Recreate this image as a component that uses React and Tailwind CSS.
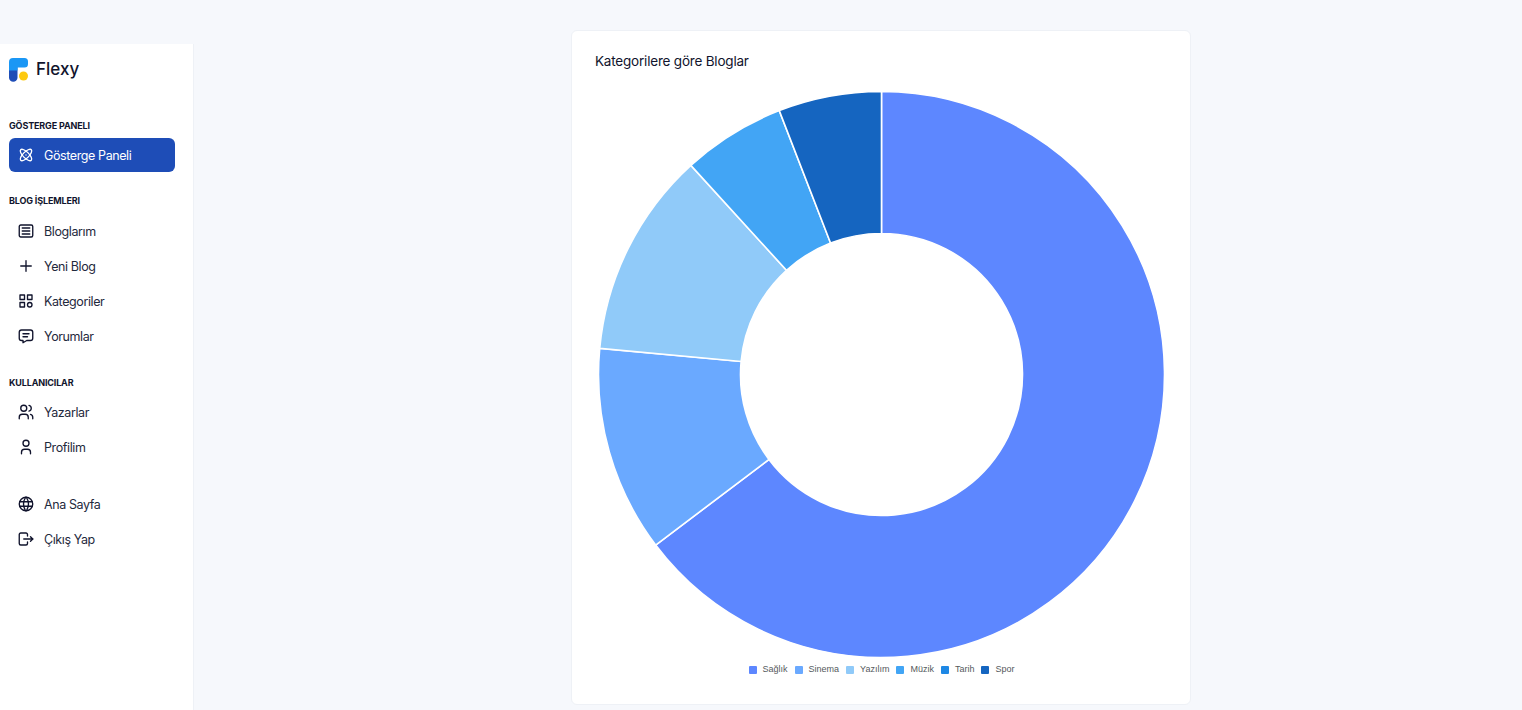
import React from "react";
import { TbAtom, TbArticle, TbPlus, TbCategory, TbMessage, TbUsers, TbUser, TbWorld, TbLogout } from "react-icons/tb";

const slices = [
  { label: "Sağlık", value: 11, color: "#5D87FF" },
  { label: "Sinema", value: 2, color: "#6AA9FF" },
  { label: "Yazılım", value: 2, color: "#90CAF9" },
  { label: "Müzik", value: 1, color: "#42A5F5" },
  { label: "Tarih", value: 0, color: "#1E88E5" },
  { label: "Spor", value: 1, color: "#1565C0" },
];

function point(r, turn) {
  const a = turn * 2 * Math.PI;
  return [(282.5 + r * Math.sin(a)).toFixed(2), (282.5 - r * Math.cos(a)).toFixed(2)];
}

function Donut() {
  const total = slices.reduce((s, x) => s + x.value, 0);
  let from = 0;
  return (
    <svg width="565" height="565" viewBox="0 0 565 565" className="block overflow-visible">
      {slices.filter((s) => s.value > 0).map((s) => {
        const to = from + s.value / total;
        const big = to - from > 0.5 ? 1 : 0;
        const [x1, y1] = point(283, from);
        const [x2, y2] = point(283, to);
        const [x3, y3] = point(141, to);
        const [x4, y4] = point(141, from);
        from = to;
        return (
          <path
            key={s.label}
            d={`M${x1} ${y1}A283 283 0 ${big} 1 ${x2} ${y2}L${x3} ${y3}A141 141 0 ${big} 0 ${x4} ${y4}Z`}
            fill={s.color}
            stroke="#fff"
            strokeWidth="1.6"
          />
        );
      })}
    </svg>
  );
}

function NavItem({ icon: Icon, label, active }) {
  return (
    <a
      className={`flex items-center h-[34px] pl-[8px] rounded-md text-[12.5px] tracking-[-0.4px] ${
        active ? "bg-[#1e4db7] text-white" : "text-[#1f2a3d]"
      }`}
    >
      <Icon size={18} strokeWidth={1.8} className={active ? "text-white" : "text-[#11142d]"} />
      <span className="ml-[9px] mt-[2px]">{label}</span>
    </a>
  );
}

function Heading({ children }) {
  return <div className="text-[9px] font-bold leading-[12px] tracking-[-0.15px] text-[#11142d]">{children}</div>;
}

export default function App() {
  return (
    <div
      className="flex h-[710px] overflow-hidden bg-[#f6f8fc]"
      style={{ fontFamily: '"Inter", "Noto Sans", sans-serif' }}
    >
      <aside className="w-[194px] shrink-0 mt-[44px] bg-white border-r border-[#eef1f6] pl-[9px] pr-[18px]">
        <div className="flex items-center gap-[8px] h-[52px]">
          <svg width="19" height="24" viewBox="0 0 19 24">
            <path d="M0 6h8.500v13.500a4.250 4.250 0 0 1-8.500 0z" fill="#1e4db7" />
            <path d="M4 0h11.500a3.500 3.500 0 0 1 3.500 3.500v2.500a3.500 3.500 0 0 1-3.500 3.500h-7v3h-8.500v-8.500a4 4 0 0 1 4-4z" fill="#1a97f5" />
            <circle cx="14.500" cy="18" r="4.500" fill="#fdc90f" />
          </svg>
          <span className="text-[17px] font-medium text-[#11142d]">Flexy</span>
        </div>
        <div className="mt-[24px]">
          <Heading>GÖSTERGE PANELI</Heading>
          <div className="mt-[6px]">
            <NavItem icon={TbAtom} label="Gösterge Paneli" active />
          </div>
        </div>
        <div className="mt-[23px]">
          <Heading>BLOG İŞLEMLERI</Heading>
          <div className="mt-[7px] flex flex-col gap-px">
            <NavItem icon={TbArticle} label="Bloglarım" />
            <NavItem icon={TbPlus} label="Yeni Blog" />
            <NavItem icon={TbCategory} label="Kategoriler" />
            <NavItem icon={TbMessage} label="Yorumlar" />
          </div>
        </div>
        <div className="mt-[24px]">
          <Heading>KULLANICILAR</Heading>
          <div className="mt-[6px] flex flex-col gap-px">
            <NavItem icon={TbUsers} label="Yazarlar" />
            <NavItem icon={TbUser} label="Profilim" />
          </div>
        </div>
        <div className="mt-[23px] flex flex-col gap-px">
          <NavItem icon={TbWorld} label="Ana Sayfa" />
          <NavItem icon={TbLogout} label="Çıkış Yap" />
        </div>
      </aside>

      <main className="flex-1 pl-[377px] pt-[30px]">
        <section className="w-[620px] h-[675px] bg-white rounded-md border border-[#eef1f6] pl-[23px] pt-[21px]">
          <h2 className="text-[13.5px] leading-[18px] font-normal tracking-[-0.2px] text-[#11142d]">Kategorilere göre Bloglar</h2>
          <div className="ml-[4px] mt-[22px]">
            <Donut />
          </div>
          <div
            className="flex justify-center items-center mt-[6px] mr-[22px] gap-[7px] text-[9px] text-[#55595c]"
            style={{ fontFamily: '"Liberation Sans", Arial, sans-serif' }}
          >
            {slices.map((s) => (
              <span key={s.label} className="flex items-center gap-[6px]">
                <i className="block w-[8px] h-[8px] rounded-[1px]" style={{ background: s.color }} />
                {s.label}
              </span>
            ))}
          </div>
        </section>
      </main>
    </div>
  );
}
